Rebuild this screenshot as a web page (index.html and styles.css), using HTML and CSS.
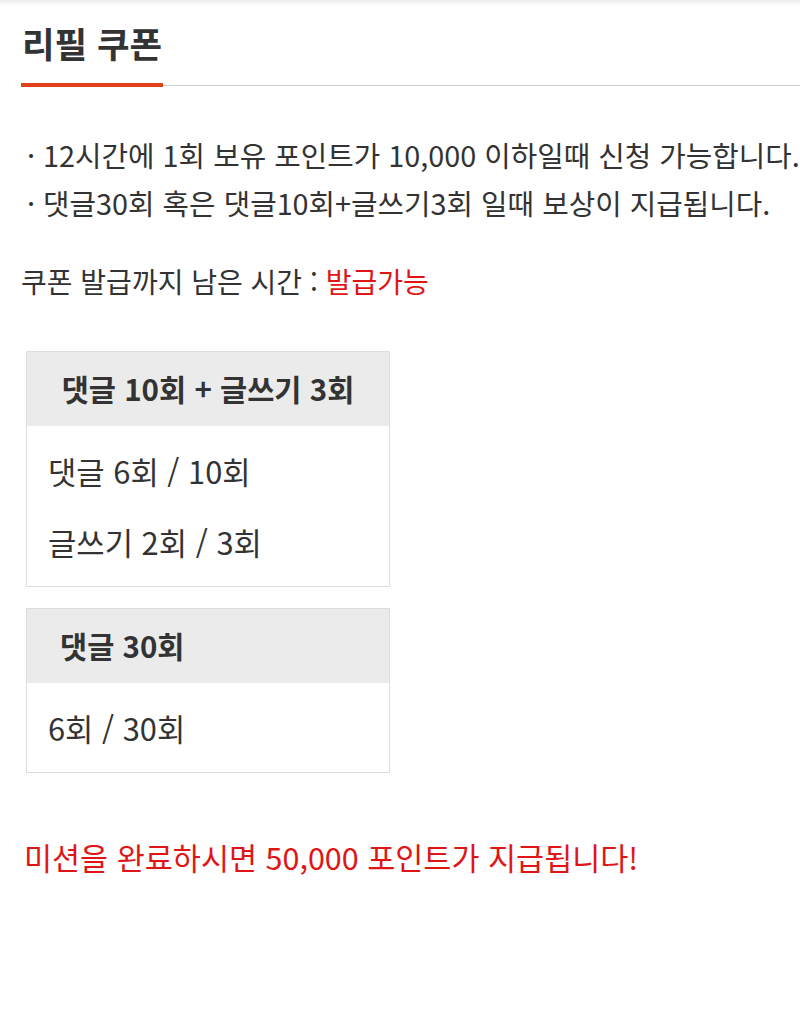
FILE: index.html
```html
<!DOCTYPE html>
<html lang="ko">
<head>
    <meta charset="UTF-8">
    <meta name="viewport" content="width=device-width, initial-scale=1.0">
    <title>리필 쿠폰</title>
    <link rel="stylesheet" href="styles.css">
</head>
<body>
    <div class="topShade"></div>
    <div class="page">
        <div class="titleBar">
            <h1 class="title">리필 쿠폰</h1>
        </div>

        <ul class="notice">
            <li>· 12시간에 1회 보유 포인트가 10,000 이하일때 신청 가능합니다.</li>
            <li>· 댓글30회 혹은 댓글10회+글쓰기3회 일때 보상이 지급됩니다.</li>
        </ul>

        <p class="timer">쿠폰 발급까지 남은 시간 : <span class="red">발급가능</span></p>

        <div class="mission">
            <div class="missionHead center">댓글 10회 + 글쓰기 3회</div>
            <div class="missionBody">
                <div class="row">댓글 6회 / 10회</div>
                <div class="row">글쓰기 2회 / 3회</div>
            </div>
        </div>

        <div class="mission">
            <div class="missionHead indent">댓글 30회</div>
            <div class="missionBody">
                <div class="row">6회 / 30회</div>
            </div>
        </div>

        <p class="reward">미션을 완료하시면 50,000 포인트가 지급됩니다!</p>
    </div>
</body>
</html>
```

FILE: styles.css
```css
body{
    margin: 0;
    background: #fff;
    color: #333;
    font-family: "Noto Sans CJK KR", "Noto Sans", sans-serif;
}
.topShade{
    height: 6px;
    background: linear-gradient(#ececec, #fff);
}
.page{
    padding-left: 21px;
}
.titleBar{
    display: flex;
    border-bottom: 1px solid #ccc;
    height: 79px;
}
.title{
    margin: 0;
    padding: 1px 1px 0 1px;
    box-sizing: border-box;
    height: 81px;
    font-size: 35.4px;
    font-weight: bold;
    line-height: 72px;
    color: #333;
    border-bottom: 4px solid #e2421b;
}
.notice{
    list-style: none;
    margin: 45px 0 0 6px;
    padding: 0;
    font-size: 28.8px;
    line-height: 48px;
}
.timer{
    margin: 30px 0 0 0;
    font-size: 28px;
    line-height: 48px;
}
.red{
    color: #e01616;
}
.mission{
    width: 362px;
    margin: 46px 0 0 5px;
    border: 1px solid #ddd;
}
.mission + .mission{
    margin-top: 21px;
}
.missionHead{
    background: #ebebeb;
    height: 74px;
    line-height: 72px;
    font-size: 29.5px;
    font-weight: bold;
}
.center{
    text-align: center;
}
.indent{
    padding-left: 33px;
}
.missionBody{
    padding: 9px 0 9px 21px;
}
.row{
    font-size: 30.8px;
    line-height: 71px;
}
.reward{
    margin: 60px 0 0 3px;
    font-size: 30.5px;
    line-height: 48px;
    color: #e01616;
}
```
